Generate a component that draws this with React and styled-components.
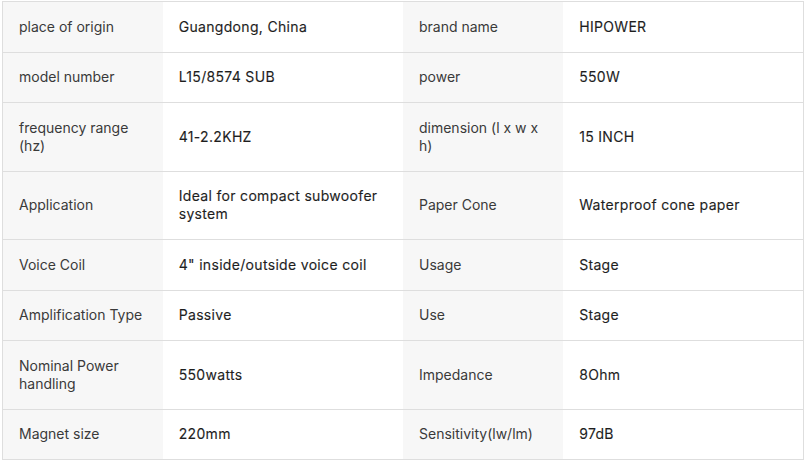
import React from 'react'
import styled, { createGlobalStyle } from 'styled-components'

const specs = [
    ['place of origin', 'Guangdong, China', 'brand name', 'HIPOWER'],
    ['model number', 'L15/8574 SUB', 'power', '550W'],
    ['frequency range (hz)', '41-2.2KHZ', 'dimension (l x w x h)', '15 INCH'],
    ['Application', 'Ideal for compact subwoofer system', 'Paper Cone', 'Waterproof cone paper'],
    ['Voice Coil', '4" inside/outside voice coil', 'Usage', 'Stage'],
    ['Amplification Type', 'Passive', 'Use', 'Stage'],
    ['Nominal Power handling', '550watts', 'Impedance', '8Ohm'],
    ['Magnet size', '220mm', 'Sensitivity(lw/lm)', '97dB'],
]

function App() {
    return (
        <>
            <GlobalStyle />
            <Wrap>
                <Table>
                    <colgroup>
                        <Col $w="20%" />
                        <Col $w="30%" />
                        <Col $w="20%" />
                        <Col $w="30%" />
                    </colgroup>
                    <tbody>
                        {specs.map((row, i) => (
                            <Row key={i}>
                                <Label>{row[0]}</Label>
                                <Value>{row[1]}</Value>
                                <Label>{row[2]}</Label>
                                <Value>{row[3]}</Value>
                            </Row>
                        ))}
                    </tbody>
                </Table>
            </Wrap>
        </>
    )
}

const GlobalStyle = createGlobalStyle`
    body {
        margin: 0;
        background: #fff;
        font-family: Inter, "Noto Sans", sans-serif;
    }
`

const Wrap = styled.div`
    padding: 1px 3px 0 2px;
`

const Table = styled.table`
    width: 802px;
    table-layout: fixed;
    border-collapse: collapse;
    border: 1px solid #dedede;
    font-size: 14px;
    line-height: 18px;
`

const Col = styled.col`
    width: ${p => p.$w};
`

const Row = styled.tr`
    border-bottom: 1px solid #dedede;
`

const Label = styled.td`
    background: #f7f7f7;
    color: #3a3a3a;
    padding: 15.75px 16px;
    vertical-align: middle;
`

const Value = styled.td`
    background: #fff;
    color: #1e1e1e;
    padding: 15.75px 16px;
    vertical-align: middle;
    letter-spacing: 0.32px;
    -webkit-text-stroke: 0.12px #1e1e1e;
`

export default App
